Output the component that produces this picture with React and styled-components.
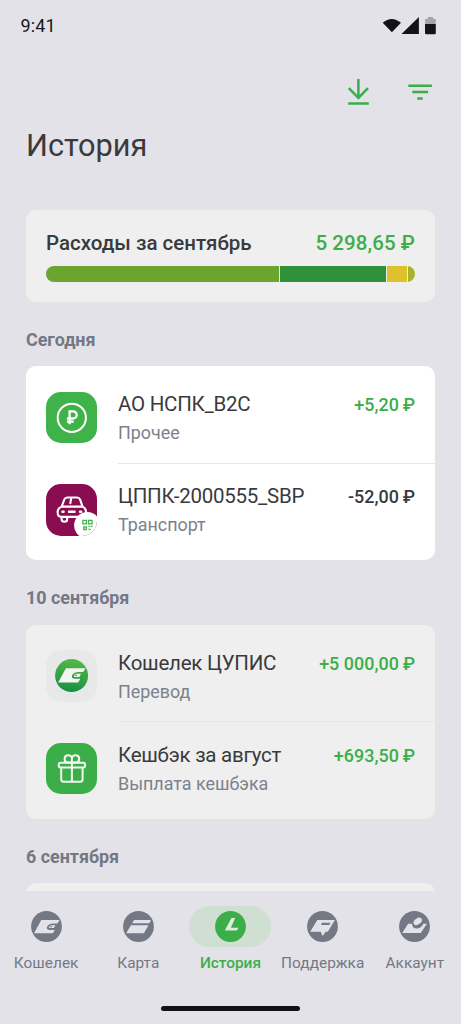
import React from "react";
import styled, { createGlobalStyle } from "styled-components";

const GlobalStyle = createGlobalStyle`
  * { box-sizing: border-box; }
  body { margin: 0; background: #e3e2e8; font-family: Roboto, "Noto Sans", sans-serif; }
  svg { display: block; flex: none; }
`;

const Screen = styled.div`
  width: 461px;
  height: 1024px;
  display: flex;
  flex-direction: column;
  overflow: hidden;
  background: #e3e2e8;
  color: #393a3d;
`;

const StatusBar = styled.header`
  height: 52px;
  flex: none;
  display: flex;
  justify-content: space-between;
  padding: 0 24px 0 20.5px;
`;

const Clock = styled.span`
  padding-top: 15px;
  font-size: 18px;
  line-height: 22px;
  letter-spacing: 0.1px;
  color: #17181b;
`;

const StatusIcons = styled.div`
  display: flex;
  padding-top: 16px;
`;

const Toolbar = styled.div`
  height: 80px;
  flex: none;
  display: flex;
  justify-content: flex-end;
  align-items: center;
  gap: 34px;
  padding-right: 28px;
`;

const Title = styled.h1`
  margin: 0;
  padding-left: 26px;
  height: 78px;
  flex: none;
  font-size: 30.7px;
  line-height: 28px;
  font-weight: 400;
  letter-spacing: 0;
`;

const Feed = styled.main`
  flex: 1;
  min-height: 0;
  overflow: hidden;
  padding: 0 26px;
`;

const Card = styled.section`
  border-radius: 10px;
  background: ${(p) => (p.$fresh ? "#ffffff" : "#efefef")};
`;

const Summary = styled(Card)`
  height: 92px;
  padding: 20px 20px 0;
`;

const SummaryLine = styled.div`
  display: flex;
  justify-content: space-between;
  font-size: 20.5px;
  line-height: 26px;
  font-weight: 500;
`;

const Total = styled.span`
  letter-spacing: 0.08px;
  color: #3cae49;
`;

const Bar = styled.div`
  display: flex;
  gap: 1px;
  height: 16px;
  margin-top: 10px;
  border-radius: 8px;
  overflow: hidden;
`;

const Segment = styled.div`
  flex: ${(p) => p.$share} 0 0;
  background: ${(p) => p.$color};
`;

const DateHeading = styled.h2`
  margin: 0;
  height: 64.1px;
  padding-top: 26.8px;
  font-size: 17.9px;
  line-height: 22px;
  font-weight: 700;
  color: #737884;
`;

const Group = styled(Card)`
  height: 194.4px;
  padding: 5.5px 0 0 20px;
`;

const Row = styled.div`
  height: 92.2px;
  display: flex;
  align-items: center;
`;

const Tile = styled.div`
  position: relative;
  width: 51.4px;
  height: 51.4px;
  flex: none;
  border-radius: 15px;
  overflow: hidden;
  background: ${(p) => p.$color};
`;

const Details = styled.div`
  flex: 1;
  height: 100%;
  margin-left: 20.6px;
  padding: 18.5px 20px 0 0;
  display: grid;
  grid-template-columns: 1fr auto;
  grid-template-rows: 29px 29px;
  border-bottom: ${(p) => (p.$divided ? "1px solid #e6e6e8" : "0")};
`;

const Name = styled.span`
  font-size: 20.5px;
  line-height: 28px;
  letter-spacing: -0.25px;
  white-space: nowrap;
`;

const Category = styled.span`
  font-size: 17.9px;
  line-height: 28px;
  color: #7c818d;
`;

const Amount = styled.span`
  font-size: 17.9px;
  line-height: 29px;
  font-weight: 500;
  letter-spacing: 0.05px;
  white-space: nowrap;
  color: ${(p) => (p.$income ? "#3cae49" : "#393a3d")};
`;

const Nav = styled.nav`
  height: 133px;
  flex: none;
  display: flex;
  flex-direction: column;
  align-items: center;
`;

const Tabs = styled.div`
  width: 461px;
  height: 115px;
  display: grid;
  grid-template-columns: repeat(5, 92.2px);
  padding-top: 15px;
`;

const Tab = styled.div`
  display: flex;
  flex-direction: column;
  align-items: center;
  font-size: 15.4px;
  line-height: 20px;
  white-space: nowrap;
  letter-spacing: ${(p) => (p.$active ? "0" : "0.03px")};
  font-weight: ${(p) => (p.$active ? 500 : 400)};
  color: ${(p) => (p.$active ? "#3cae49" : "#737884")};
`;

const Pill = styled.div`
  width: 82px;
  height: 41px;
  margin-bottom: 6px;
  border-radius: 21px;
  display: flex;
  align-items: center;
  justify-content: center;
  background: ${(p) => (p.$active ? "#cfdfd2" : "transparent")};
`;

const HomeIndicator = styled.div`
  width: 139px;
  height: 5px;
  border-radius: 3px;
  background: #101216;
`;

const RubleIcon = () => (
  <svg width="52" height="52" viewBox="0 0 52 52" fill="none" stroke="#fff">
    <circle cx="25.8" cy="25.8" r="14.1" strokeWidth="2" />
    <path d="M23.6 32.3V19.3H27.1a3.6 3.6 0 0 1 0 7.2H20.9M20.9 29.7H27.8" strokeWidth="2.3" />
  </svg>
);

const CarIcon = () => (
  <svg width="52" height="52" viewBox="0 0 52 52" fill="none">
    <g stroke="#fff" strokeWidth="2.1" strokeLinejoin="round" strokeLinecap="round">
      <path d="M15.6 22.6L18.4 15.4Q19.2 13.5 21.2 13.5H31Q33.2 13.5 34 15.4L36.6 22.6M15.6 22.6H36.6Q40 24.2 40 28Q40 32.9 36.6 32.9H15.2Q11.6 32.9 11.6 28Q11.6 24.2 15.6 22.6Z" />
      <path d="M15.6 33V35a2.8 2.8 0 0 0 5.6 0V33M25.3 14L24.3 19.2" />
      <path d="M16.4 27.8h1.2M23 27.8h5.6M34 27.8h1.2" strokeWidth="2.4" />
    </g>
    <circle cx="41.3" cy="41.3" r="13.2" fill="#fff" />
    <g stroke="#43b34c" strokeWidth="1.3">
      <path d="M36.9 36.4h3.5v3.5h-3.5zM42.5 36.4h3.5v3.5h-3.5zM37.7 42.8h2.7v2.7H37.7z" />
      <path d="M42.4 42.4h1.5M44.7 42.4h2M42.4 45.4h2.2" />
    </g>
  </svg>
);

const GiftIcon = () => (
  <svg width="52" height="52" viewBox="0 0 52 52" fill="none" stroke="#f3f5f3" strokeWidth="2" strokeLinejoin="round">
    <rect x="12.8" y="19.8" width="26.2" height="4.6" rx="1.6" />
    <path d="M15.2 24.4V36.6Q15.2 38.7 17.5 38.7H34.3Q36.6 38.7 36.6 36.6V24.4M25.9 19.6V38.7" />
    <path d="M25.9 19.6H22.2a3.7 3.7 0 1 1 3.7-4.5V19.6ZM25.9 19.6H29.6a3.7 3.7 0 1 0-3.7-4.5" />
  </svg>
);

const WalletShape = ({ hole, fill }) => (
  <>
    <path d="M10.3 9.1H28.6L26.4 12.6H21.6Q17.9 12.7 16.3 15.2Q14.9 18.4 18 18.9H23.8L21.7 22.3H3Z" fill={fill} />
    <path d="M18.6 17.1Q17.4 17.1 17.9 16Q18.9 14.2 20.6 14.2H24.4L22.9 17.1Z" fill={fill} />
    <ellipse cx="20" cy="15.7" rx=".9" ry=".6" fill={hole} />
  </>
);

const WalletTileIcon = () => (
  <svg width="52" height="52" viewBox="0 0 52 52">
    <defs>
      <linearGradient id="walletGreen" x1="0.6" y1="0" x2="0.4" y2="1">
        <stop offset="0" stopColor="#55b948" />
        <stop offset="1" stopColor="#168f43" />
      </linearGradient>
    </defs>
    <circle cx="25.6" cy="25.6" r="16.5" fill="url(#walletGreen)" />
    <g transform="translate(8.9 8.6) scale(1.07)">
      <WalletShape fill="#f3f5f3" hole="#2f9f45" />
    </g>
  </svg>
);

const navShapes = {
  wallet: <WalletShape fill="#e3e2e8" hole="#737884" />,
  card: (
    <g fill="#e3e2e8">
      <path d="M11 9.1H28L26.4 12.2H9.2Z" />
      <path d="M7.9 14.2H25.4L20.9 22.3H3.2Z" />
    </g>
  ),
  history: <path d="M16.4 7.1H20.2L15.9 16.7H23.4L22 19.4H9.8Z" fill="#d9eedc" />,
  support: (
    <g>
      <path d="M10.3 9.1H27.9L20.8 20.8H18.7L15.6 25L13.7 20.8H3.2Z" fill="#e3e2e8" />
      <path d="M15.1 11.8H23.5L22.3 13.9H13.9Z" fill="#737884" />
    </g>
  ),
  account: (
    <g fill="#e3e2e8">
      <path d="M9.1 12.8H13.1Q13 17.5 18.1 17.5Q22.8 16.8 24.4 12.8H27.9L21.8 22H3.2Z" />
      <ellipse cx="18.7" cy="10.4" rx="4.6" ry="3" transform="rotate(-35 18.7 10.4)" />
    </g>
  ),
};

const NavIcon = ({ name, active }) => (
  <svg width="31" height="31" viewBox="0 0 31 31">
    <circle cx="15.5" cy="15.5" r="15.4" fill={active ? "#3cae49" : "#737884"} />
    {navShapes[name]}
  </svg>
);

const spending = [
  { share: 233, color: "#6ba42e" },
  { share: 105.5, color: "#31913a" },
  { share: 20, color: "#dfc22b" },
  { share: 7.5, color: "#a6b42b" },
];

const groups = [
  {
    date: "Сегодня",
    fresh: true,
    items: [
      { icon: <RubleIcon />, color: "#40b24a", name: "АО НСПК_B2C", category: "Прочее", amount: "+5,20\u2009₽", income: true },
      { icon: <CarIcon />, color: "#890d50", name: "ЦППК-2000555_SBP", category: "Транспорт", amount: "-52,00\u2009₽" },
    ],
  },
  {
    date: "10 сентября",
    items: [
      { icon: <WalletTileIcon />, color: "#e8e8e8", name: "Кошелек ЦУПИС", category: "Перевод", amount: "+5 000,00\u2009₽", income: true },
      { icon: <GiftIcon />, color: "#3cae49", name: "Кешбэк за август", category: "Выплата кешбэка", amount: "+693,50\u2009₽", income: true },
    ],
  },
  { date: "6 сентября", items: [] },
];

const tabs = [
  { icon: "wallet", label: "Кошелек" },
  { icon: "card", label: "Карта" },
  { icon: "history", label: "История", active: true },
  { icon: "support", label: "Поддержка" },
  { icon: "account", label: "Аккаунт" },
];

export default function App() {
  return (
    <Screen>
      <GlobalStyle />
      <StatusBar>
        <Clock>9:41</Clock>
        <StatusIcons>
          <svg width="55" height="20" viewBox="0 0 55 20" fill="#111316">
            <path d="M0.7 6.8Q9.7 -.8 19 6.8L9.9 16.2Z" />
            <path d="M19.5 18.1L36.9 1V18.1Z" />
            <path d="M43 8V4Q43 2.7 44.3 2.7H46V1H51V2.7H52.5Q53.8 2.7 53.8 4V8Z" fill="#a5a4a9" />
            <path d="M43 8H53.8V17Q53.8 18.2 52.5 18.2H44.3Q43 18.2 43 17Z" />
          </svg>
        </StatusIcons>
      </StatusBar>
      <Toolbar>
        <svg width="30" height="30" viewBox="0 0 30 30" fill="none" stroke="#3cae49" strokeWidth="2.5">
          <path d="M15.4 2.1V20.8M5.8 11.2L15.4 20.9L25 11.2M5.2 26.4H25.8" />
        </svg>
        <svg width="26" height="30" viewBox="0 0 26 30" fill="none" stroke="#3cae49" strokeWidth="2.5">
          <path d="M1.3 8.7H24.9M5.3 14.9H21.1M10.3 21.4H15.8" />
        </svg>
      </Toolbar>
      <Title>История</Title>
      <Feed>
        <Summary>
          <SummaryLine>
            <span>Расходы за сентябрь</span>
            <Total>5 298,65 ₽</Total>
          </SummaryLine>
          <Bar>
            {spending.map((s) => (
              <Segment key={s.color} $share={s.share} $color={s.color} />
            ))}
          </Bar>
        </Summary>
        {groups.map((group) => (
          <React.Fragment key={group.date}>
            <DateHeading>{group.date}</DateHeading>
            <Group $fresh={group.fresh}>
              {group.items.map((item, i) => (
                <Row key={item.name}>
                  <Tile $color={item.color}>{item.icon}</Tile>
                  <Details $divided={i < group.items.length - 1}>
                    <Name>{item.name}</Name>
                    <Amount $income={item.income}>{item.amount}</Amount>
                    <Category>{item.category}</Category>
                  </Details>
                </Row>
              ))}
            </Group>
          </React.Fragment>
        ))}
      </Feed>
      <Nav>
        <Tabs>
          {tabs.map((tab) => (
            <Tab key={tab.label} $active={tab.active}>
              <Pill $active={tab.active}>
                <NavIcon name={tab.icon} active={tab.active} />
              </Pill>
              {tab.label}
            </Tab>
          ))}
        </Tabs>
        <HomeIndicator />
      </Nav>
    </Screen>
  );
}
